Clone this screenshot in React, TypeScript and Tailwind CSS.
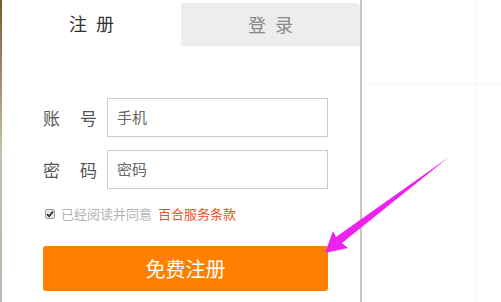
import React from "react";

const font = { fontFamily: '"Microsoft YaHei", "Noto Sans CJK SC", "Noto Sans", sans-serif' };

export default function App() {
  return (
    <div className="relative w-[501px] h-[302px] overflow-hidden bg-white flex" style={font}>
      <div className="w-[2px] h-full bg-gradient-to-b from-[#7a5a2a] via-[#c9bfae] to-[#bdb5a8]" />
      <div className="w-[360px] h-full bg-white border-r-[2px] border-[#cdc5bc] flex flex-col">
        <div className="flex h-[46px]">
          <div className="w-[179px] flex items-center justify-center text-[18px] text-[#333] tracking-[9px] pl-[9px]">注册</div>
          <div className="flex-1 mt-[3px] bg-[#ededed] rounded-tr-[5px] flex items-center justify-center text-[18px] text-[#888] tracking-[9px] pl-[9px]">登录</div>
        </div>
        <div className="pl-[41px] pt-[52px] flex flex-col">
          <div className="flex items-center h-[39px]">
            <div className="w-[64px] flex justify-between pr-[10px] text-[17px] text-[#555]"><span>账</span><span>号</span></div>
            <div className="w-[221px] h-[39px] border border-[#cccccc] flex items-center pl-[9px] text-[15px] text-[#666]">手机</div>
          </div>
          <div className="flex items-center h-[39px] mt-[13px]">
            <div className="w-[64px] flex justify-between pr-[10px] text-[17px] text-[#555]"><span>密</span><span>码</span></div>
            <div className="w-[221px] h-[39px] border border-[#cccccc] flex items-center pl-[9px] text-[15px] text-[#666]">密码</div>
          </div>
          <div className="flex items-center mt-[15px] h-[20px] text-[13px]">
            <div className="ml-[2px] w-[10px] h-[10px] border border-[#999] bg-[#e8e8e8] rounded-[2px] flex items-center justify-center">
              <svg width="8" height="8" viewBox="0 0 8 8"><path d="M1 4.2 L3 6.3 L7 1.5" stroke="#222" strokeWidth="1.6" fill="none" /></svg>
            </div>
            <span className="ml-[6px] text-[#b3b3b3]">已经阅读并同意</span>
            <span className="ml-[6px] text-[#e8542a]">百合服务条款</span>
          </div>
          <div className="mt-[22px] w-[285px] h-[45px] bg-[#ff8000] rounded-[3px] flex items-center justify-center text-white text-[20px]">免费注册</div>
        </div>
      </div>
      <div className="flex-1 relative">
        <div className="absolute left-0 right-0 top-[84px] h-px bg-[#f6f6f6]" />
        <div className="absolute top-0 bottom-0 left-[113px] w-px bg-[#f8f8f8]" />
      </div>
      <svg className="absolute left-0 top-0" width="501" height="302" viewBox="0 0 501 302">
        <path d="M449 157 L342 243 L348 248 L325 253 L333 231 L336 237 Z" fill="#ee22ee" />
      </svg>
    </div>
  );
}
